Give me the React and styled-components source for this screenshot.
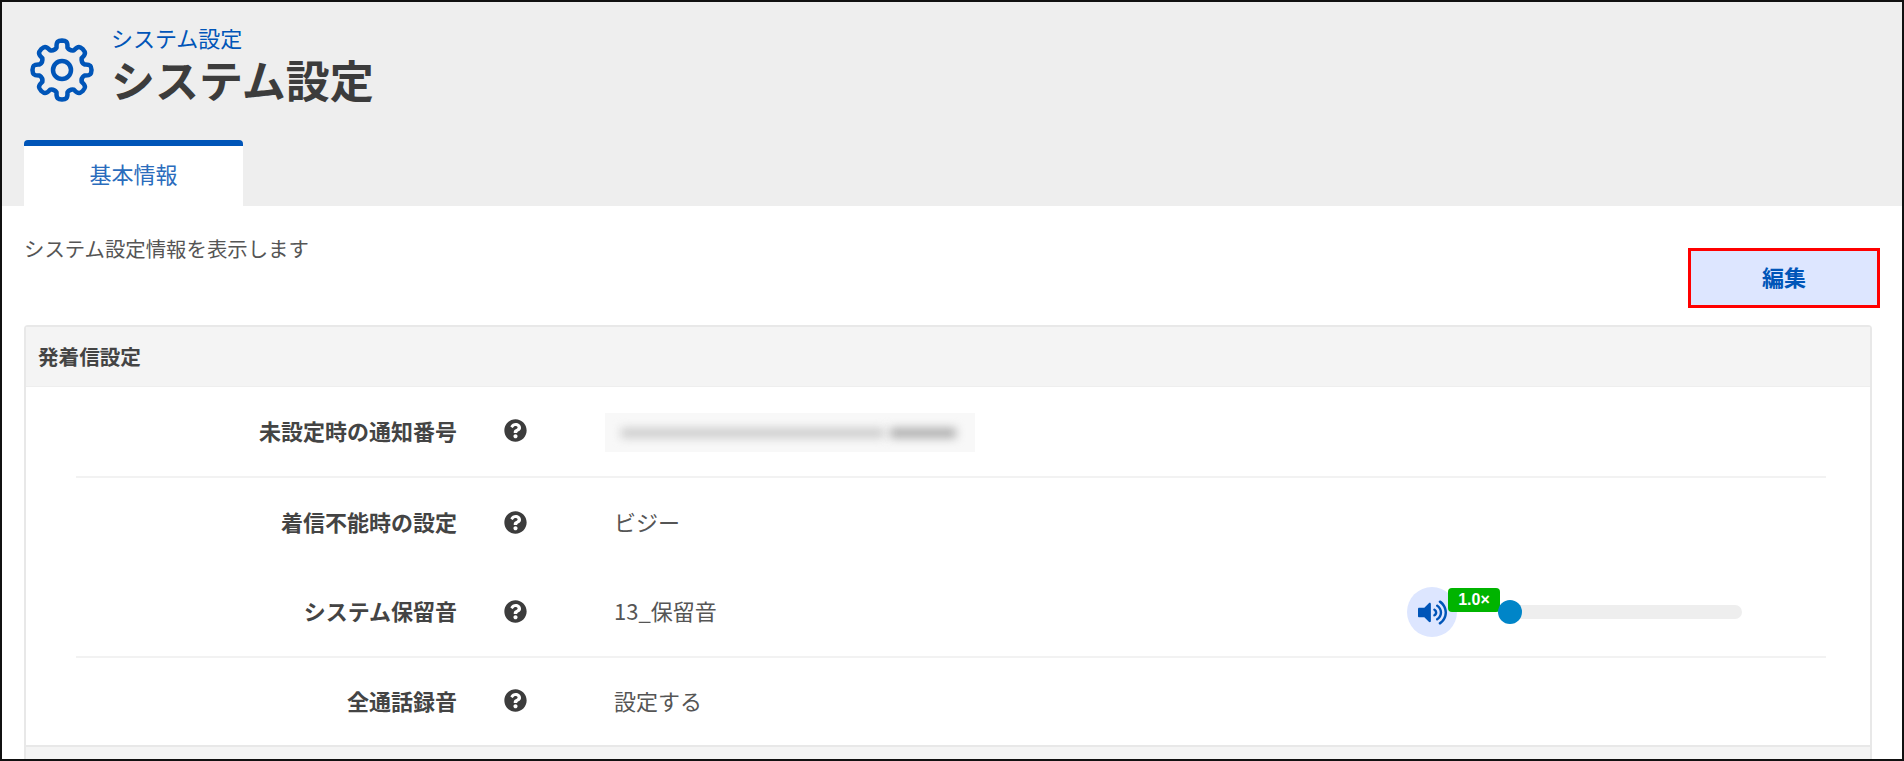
import React from "react";
import styled, { createGlobalStyle } from "styled-components";
import { FaQuestionCircle, FaVolumeUp } from "react-icons/fa";

const GlobalStyle = createGlobalStyle`
  html, body {
    margin: 0;
    padding: 0;
    background: #fff;
    overflow: hidden;
  }
  * {
    box-sizing: border-box;
  }
`;

const Page = styled.div`
  width: 1904px;
  height: 761px;
  border: 2px solid #111;
  overflow: hidden;
  font-family: "Noto Sans CJK JP", "Noto Sans", sans-serif;
  color: #444;
  background: #fff;
`;

const Header = styled.header`
  height: 204px;
  background: #eee;
  padding: 0 22px;
  display: flex;
  flex-direction: column;
  justify-content: space-between;
`;

const TitleRow = styled.div`
  display: flex;
  align-items: flex-start;
  gap: 17px;
  padding: 23px 0 0 6px;
`;

const TitleText = styled.div`
  display: flex;
  flex-direction: column;
`;

const Crumb = styled.span`
  font-size: 22px;
  line-height: 24px;
  color: #0055b8;
`;

const Title = styled.h1`
  margin: 2px 0 0;
  font-size: 44px;
  line-height: 56px;
  font-weight: 700;
  color: #3c3c3c;
`;

const Tab = styled.div`
  width: 219px;
  height: 66px;
  background: #fff;
  border-top: 6px solid #0055b8;
  border-radius: 4px 4px 0 0;
  display: flex;
  align-items: center;
  justify-content: center;
  padding-bottom: 6px;
  font-size: 22px;
  color: #2a6cbc;
`;

const Content = styled.main`
  padding: 0 30px 0 22px;
`;

const TopBar = styled.div`
  display: flex;
  justify-content: space-between;
  align-items: flex-start;
  height: 119px;
`;

const Description = styled.p`
  margin: 0;
  padding-top: 27px;
  font-size: 20.4px;
  line-height: 30px;
  color: #555;
`;

const EditButton = styled.button`
  width: 192px;
  height: 60px;
  margin: 42px -8px 0 0;
  padding: 0 0 4px;
  background: #dde6ff;
  border: 3px solid #f00;
  font-family: inherit;
  font-size: 22px;
  font-weight: 700;
  color: #0055b8;
`;

const Panel = styled.section`
  border: 2px solid #e8e8e8;
  border-bottom: none;
  border-radius: 4px 4px 0 0;
`;

const PanelHeader = styled.h2`
  margin: 0;
  height: 60px;
  padding: 0 12px 2px;
  display: flex;
  align-items: center;
  background: #f4f4f4;
  border-bottom: 1px solid #eee;
  font-size: 20.6px;
  font-weight: 700;
  color: #444;
`;

const Rows = styled.div`
  padding: 0 44px 0 50px;
`;

const Row = styled.div`
  height: ${(p) => p.$height}px;
  padding-bottom: 4px;
  display: flex;
  align-items: center;
  border-bottom: ${(p) => (p.$divider ? "2px solid #f2f2f2" : "none")};
`;

const Label = styled.div`
  width: 381px;
  text-align: right;
  font-size: 22px;
  font-weight: 700;
  color: #444;
`;

const Help = styled.span`
  width: 157px;
  margin-top: 2px;
  padding-left: 47px;
  display: flex;
  font-size: 23px;
  color: #3c3c3c;
`;

const Value = styled.div`
  font-size: 22px;
  color: #555;
`;

const BlurField = styled.div`
  width: 370px;
  height: 39px;
  margin: 6px 0 0 -9px;
  padding: 0 19px 0 16px;
  display: flex;
  align-items: center;
  gap: 6px;
  background: #f8f8f8;
`;

const BlurText = styled.span`
  flex: ${(p) => p.$grow};
  height: 10px;
  background: ${(p) => p.$color};
  filter: blur(5px);
`;

const Player = styled.div`
  margin: 4px 84px 0 auto;
  width: 335px;
  height: 50px;
  position: relative;
  display: flex;
  align-items: center;
`;

const SoundButton = styled.span`
  width: 50px;
  height: 50px;
  flex: none;
  padding-left: 11px;
  border-radius: 50%;
  background: #dde6ff;
  display: flex;
  align-items: center;
  font-size: 29px;
  color: #0055b8;
`;

const Track = styled.div`
  flex: 1;
  height: 14px;
  margin-left: 50px;
  border-radius: 7px;
  background: #eee;
`;

const Thumb = styled.span`
  position: absolute;
  left: 91px;
  top: 13px;
  width: 24px;
  height: 24px;
  border-radius: 50%;
  background: #0085c8;
`;

const SpeedBadge = styled.span`
  position: absolute;
  left: 41px;
  top: 1px;
  width: 52px;
  height: 24px;
  border-radius: 4px;
  background: #00b400;
  display: flex;
  align-items: center;
  justify-content: center;
  font-family: "Liberation Sans", sans-serif;
  font-size: 16px;
  font-weight: 700;
  color: #fff;
`;

const PanelFooter = styled.div`
  height: 40px;
  background: #f4f4f4;
  border-top: 2px solid #e8e8e8;
`;

// 8枚歯の歯車
const gearPath = () => {
  const xy = (a, r) => `${(32 + r * Math.cos(a)).toFixed(2)} ${(32 + r * Math.sin(a)).toFixed(2)}`;
  let d = "";
  for (let i = 0; i < 8; i++) {
    const a = (i * Math.PI) / 4 - Math.PI / 2;
    const start = xy(a - 0.24, 23);
    d += `${i === 0 ? "M" : "Q" + xy(a - Math.PI / 8, 20.5) + " "}${start} `;
    d += `C${xy(a - 0.2, 29.5)} ${xy(a - 0.12, 29.5)} ${xy(a, 29.5)} `;
    d += `C${xy(a + 0.12, 29.5)} ${xy(a + 0.2, 29.5)} ${xy(a + 0.24, 23)} `;
  }
  return d + `Q${xy(-Math.PI / 2 - Math.PI / 8, 20.5)} ${xy(-Math.PI / 2 - 0.24, 23)} Z`;
};

const GearIcon = () => (
  <svg width="64" height="64" viewBox="0 0 64 64" fill="none" stroke="#0055b8" strokeWidth="4.5" strokeLinejoin="round" style={{ marginTop: 13 }}>
    <path d={gearPath()} />
    <circle cx="32" cy="32" r="9" />
  </svg>
);

const HelpIcon = () => (
  <Help>
    <FaQuestionCircle />
  </Help>
);

const App = () => {
  return (
    <Page>
      <GlobalStyle />
      <Header>
        <TitleRow>
          <GearIcon />
          <TitleText>
            <Crumb>システム設定</Crumb>
            <Title>システム設定</Title>
          </TitleText>
        </TitleRow>
        <Tab>基本情報</Tab>
      </Header>
      <Content>
        <TopBar>
          <Description>システム設定情報を表示します</Description>
          <EditButton>編集</EditButton>
        </TopBar>
        <Panel>
          <PanelHeader>発着信設定</PanelHeader>
          <Rows>
            <Row $height={91} $divider>
              <Label>未設定時の通知番号</Label>
              <HelpIcon />
              <BlurField>
                <BlurText $grow={4} $color="#cccccc" />
                <BlurText $grow={1} $color="#acacac" />
              </BlurField>
            </Row>
            <Row $height={90}>
              <Label>着信不能時の設定</Label>
              <HelpIcon />
              <Value>ビジー</Value>
            </Row>
            <Row $height={90} $divider>
              <Label>システム保留音</Label>
              <HelpIcon />
              <Value>13_保留音</Value>
              <Player>
                <SoundButton>
                  <FaVolumeUp />
                </SoundButton>
                <Track />
                <SpeedBadge>1.0×</SpeedBadge>
                <Thumb />
              </Player>
            </Row>
            <Row $height={87}>
              <Label>全通話録音</Label>
              <HelpIcon />
              <Value>設定する</Value>
            </Row>
          </Rows>
          <PanelFooter />
        </Panel>
      </Content>
    </Page>
  );
};

export default App;
